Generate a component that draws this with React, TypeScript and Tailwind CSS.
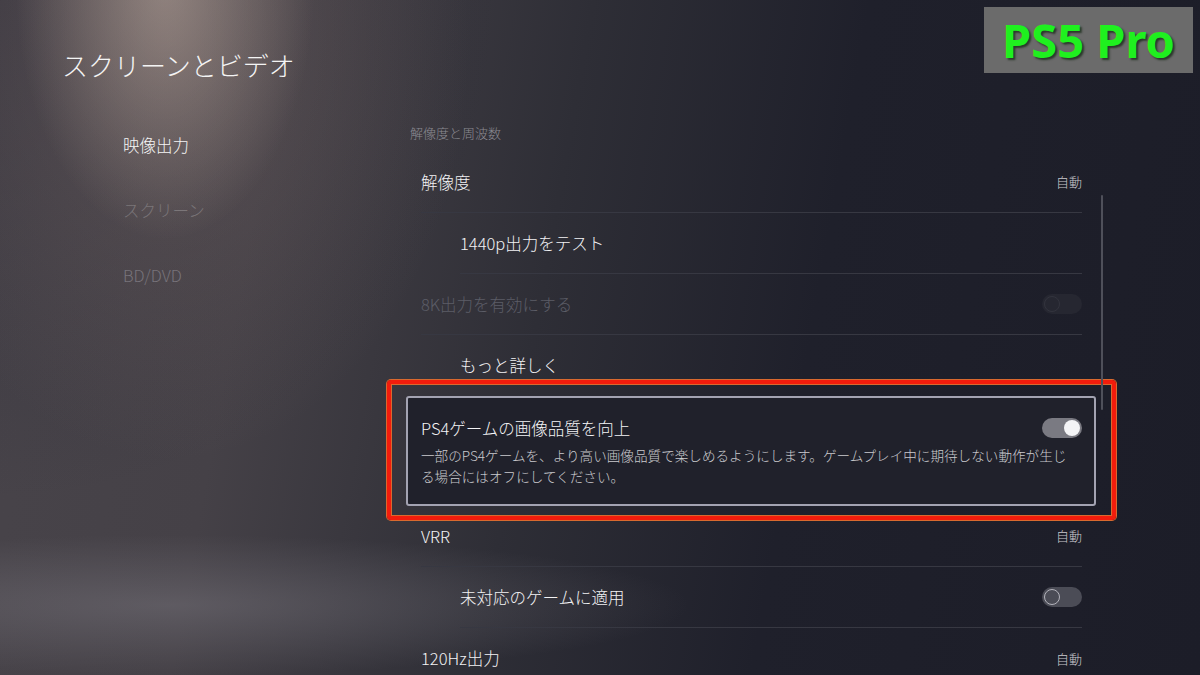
import React from "react";

/* ─── Toggle ─── */
function Toggle({ on = false, dim = false }: { on?: boolean; dim?: boolean }) {
  if (on) {
    return (
      <div className="w-[40px] h-[20px] rounded-full bg-[#7a7a82] flex items-center justify-end pr-[2px]">
        <div className="w-[16px] h-[16px] rounded-full bg-[#f4f4f6]" />
      </div>
    );
  }
  return (
    <div className={`w-[40px] h-[20px] rounded-full flex items-center pl-[2px] ${dim ? "bg-[#262731]" : "bg-[#4b4c56]"}`}>
      <div className={`w-[16px] h-[16px] rounded-full border-[1.5px] ${dim ? "border-[#33343e]" : "border-[#b4b4bc]"}`} />
    </div>
  );
}

/* ─── Row ─── */
function Row({
  label,
  sub = false,
  value,
  toggle,
  dim = false,
  divider = true,
  className = "",
}: {
  label: string;
  sub?: boolean;
  value?: string;
  toggle?: "on" | "off" | "dim";
  dim?: boolean;
  divider?: boolean;
  className?: string;
}) {
  return (
    <div className={`h-[61px] ${sub ? "pl-[39px]" : ""} ${className}`}>
      <div className={`h-full flex items-center justify-between ${divider ? "border-b border-[#373842]" : ""}`}>
        <span className={`text-[16.5px] font-light ${dim ? "text-[#5c5d67]" : "text-[#f2f2f4]"}`}>{label}</span>
        {value && <span className="text-[13px] font-light text-[#c9c9ce]">{value}</span>}
        {toggle === "off" && <Toggle />}
        {toggle === "dim" && <Toggle dim />}
      </div>
    </div>
  );
}

export default function App() {
  return (
    <div
      className="relative w-[1200px] h-[675px] overflow-hidden flex bg-[radial-gradient(ellipse_150px_260px_at_165px_-20px,rgba(205,185,172,0.5),transparent),radial-gradient(ellipse_300px_420px_at_170px_40px,rgba(140,120,115,0.35),transparent),radial-gradient(ellipse_520px_70px_at_170px_605px,rgba(125,122,130,0.45),transparent),radial-gradient(ellipse_500px_500px_at_0px_0px,rgba(40,40,52,0.5),transparent),linear-gradient(100deg,#48444a_0%,#454147_22%,#2e2e36_45%,#1f202b_66%,#1c1d28_100%)]"
      style={{ fontFamily: '"Noto Sans CJK JP", "Noto Sans", sans-serif' }}
    >
      {/* Left menu */}
      <div className="w-[421px] shrink-0 pl-[62px] pt-[47px]">
        <h1 className="text-[26px] leading-[36px] text-[#f4f4f4] font-light">スクリーンとビデオ</h1>
        <nav className="mt-[30px] pl-[61px] flex flex-col font-light">
          <div className="h-[65px] flex items-center text-[16.5px] text-[#f4f4f4]">映像出力</div>
          <div className="h-[65px] flex items-center text-[16.5px] text-[#7b7679]">スクリーン</div>
          <div className="h-[65px] flex items-center text-[16.5px] text-[#77737a]">BD/DVD</div>
        </nav>
      </div>

      {/* Settings list */}
      <div className="relative w-[661px] pt-[124px]">
        <div className="-ml-[11px] text-[13px] leading-[18px] font-light text-[#8c8b92]">解像度と周波数</div>

        <div className="mt-[10px] flex flex-col">
          <Row label="解像度" value="自動" />
          <Row label="1440p出力をテスト" sub />
          <Row label="8K出力を有効にする" dim toggle="dim" />
          <Row label="もっと詳しく" sub divider={false} className="h-[60px]" />

          {/* Focused item */}
          <div className="relative -ml-[15px] -mr-[14px] border-2 border-[#a3a3b2] rounded-[3px] bg-[#20212b] pl-[13px] pr-[12px] pt-[18px] pb-[17px]">
            <div className="flex items-center justify-between h-[24px]">
              <span className="text-[16.5px] font-light text-[#f4f4f6]">PS4ゲームの画像品質を向上</span>
              <Toggle on />
            </div>
            <p className="mt-[5px] text-[13.6px] leading-[21px] font-light text-[#cacace] whitespace-nowrap">
              一部のPS4ゲームを、より高い画像品質で楽しめるようにします。ゲームプレイ中に期待しない動作が生じ
              <br />
              る場合にはオフにしてください。
            </p>
            {/* Annotation frame */}
            <div className="absolute -left-[21px] -top-[18px] -right-[22px] -bottom-[16px] border-[4px] border-[#f21c0c] rounded-[4px] shadow-[0_0_0_1px_#d9692f,inset_0_0_0_1px_#d9692f] pointer-events-none" />
          </div>

          <Row label="VRR" value="自動" />
          <Row label="未対応のゲームに適用" sub toggle="off" />
          <Row label="120Hz出力" value="自動" divider={false} />
        </div>

        {/* Scroll thumb */}
        <div className="absolute left-[680px] top-[195px] w-[2px] h-[215px] rounded-full bg-[#4f505a]" />
      </div>

      {/* PS5 Pro badge */}
      <div className="absolute left-[984px] top-[7px] w-[209px] h-[66px] bg-[#6b6b6b] flex items-center justify-center">
        <span
          className="text-[47px] font-bold leading-none text-[#1ff01f] [text-shadow:2px_2px_2px_rgba(20,40,20,0.75)]"
          style={{ fontFamily: '"Noto Sans", sans-serif' }}
        >
          PS5 Pro
        </span>
      </div>
    </div>
  );
}
